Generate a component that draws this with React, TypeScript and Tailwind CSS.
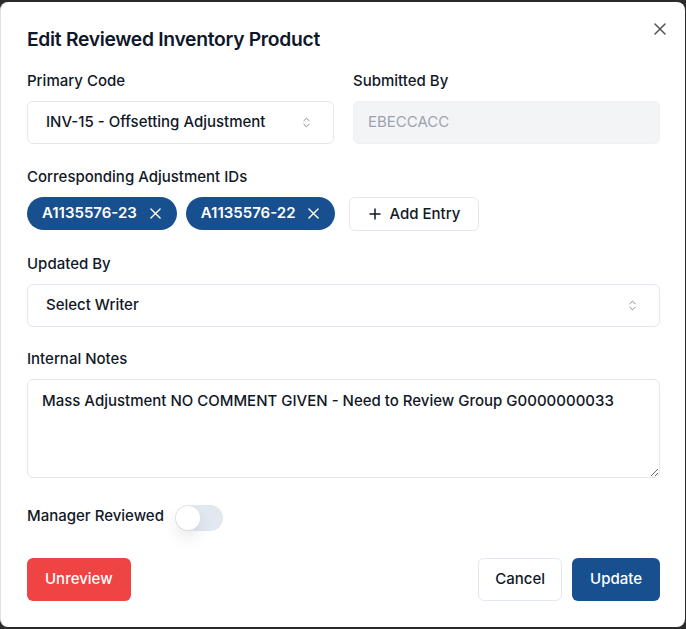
import { ChevronsUpDown } from 'lucide-react'

function CloseIcon({ size = 11, className = '' }: { size?: number; className?: string }) {
  return (
    <svg width={size} height={size} viewBox="0 0 12 12" className={className} fill="none">
      <path d="M1 1l10 10M11 1L1 11" stroke="currentColor" strokeWidth="1.5" strokeLinecap="round" />
    </svg>
  )
}

function Label({ children }: { children: React.ReactNode }) {
  return <label className="block pt-[1px] text-[15px] leading-[21px] font-medium text-[#111827]">{children}</label>
}

function SelectBox({ value }: { value: string }) {
  return (
    <div className="flex h-[43px] items-center justify-between rounded-md border border-[#e2e8f0] bg-white pl-[18px] pr-[20px] text-[15px] font-medium text-[#111827]">
      <span>{value}</span>
      <ChevronsUpDown size={13} strokeWidth={1.5} className="text-gray-500" />
    </div>
  )
}

function Chip({ id }: { id: string }) {
  return (
    <span className="flex h-[33px] items-center gap-[13px] rounded-full bg-[#184f8e] pl-[15px] pr-[16px] text-[15px] font-semibold text-white">
      {id}
      <CloseIcon size={11} />
    </span>
  )
}

export default function App() {
  return (
    <div className="h-[629px] w-[686px] bg-[#2b2b2b] pt-[2px]" style={{ fontFamily: 'Inter, "Noto Sans", sans-serif' }}>
      <div className="relative flex h-[625px] w-[685px] flex-col rounded-lg border-l border-[#dbe3ee] bg-white pl-[26px] pr-[25px] pt-[23px]">
        <button className="absolute right-[19px] top-[21px] text-[#52525b]">
          <CloseIcon size={12} />
        </button>
        <h2 className="text-[19.3px] leading-[28px] font-semibold tracking-[-0.3px] text-[#0f172a]">Edit Reviewed Inventory Product</h2>

        <div className="mt-[16px] flex flex-col gap-[21px]">
          <div className="grid grid-cols-2 gap-[19px]">
            <div className="flex flex-col gap-[10px]">
              <Label>Primary Code</Label>
              <SelectBox value="INV-15 - Offsetting Adjustment" />
            </div>
            <div className="flex flex-col gap-[10px]">
              <Label>Submitted By</Label>
              <div className="flex h-[43px] items-center rounded-md border border-[#eef1f5] bg-[#f3f4f6] px-[14px] text-[15px] text-[#9ca3af]">
                EBECCACC
              </div>
            </div>
          </div>

          <div className="flex flex-col gap-[10px]">
            <Label>Corresponding Adjustment IDs</Label>
            <div className="flex items-start gap-[9px]">
              <Chip id="A1135576-23" />
              <Chip id="A1135576-22" />
              <button className="ml-[5px] flex h-[34px] items-center gap-[8px] rounded-md border border-[#e2e8f0] bg-white pl-[19px] pr-[18px] text-[15px] font-medium text-[#111827]">
                <svg width="12" height="12" viewBox="0 0 12 12" fill="none">
                  <path d="M6 0.5v11M0.5 6h11" stroke="currentColor" strokeWidth="1.5" />
                </svg>
                Add Entry
              </button>
            </div>
          </div>

          <div className="flex flex-col gap-[10px]">
            <Label>Updated By</Label>
            <SelectBox value="Select Writer" />
          </div>

          <div className="-mt-[1px] flex flex-col gap-[10px]">
            <Label>Internal Notes</Label>
            <textarea
              className="h-[99px] w-full rounded-md border border-[#e2e8f0] px-[14px] py-[10px] text-[15px] leading-[22px] font-medium text-[#111827] outline-none"
              defaultValue="Mass Adjustment NO COMMENT GIVEN - Need to Review Group G0000000033"
            />
          </div>
        </div>

        <div className="mt-[26px] flex items-start gap-[11px]">
          <Label>Manager Reviewed</Label>
          <span className="mt-[1px] flex h-[26px] w-[48px] items-center rounded-full bg-[#e2e8f0] px-[1px]">
            <span className="h-[24px] w-[24px] rounded-full bg-white shadow-[0_8px_16px_rgba(0,0,0,0.09)]" />
          </span>
        </div>

        <div className="mt-[27px] flex items-center justify-between">
          <button className="h-[43px] rounded-md bg-[#ef4444] px-[18px] text-[15px] font-medium text-white">Unreview</button>
          <div className="flex gap-[10px]">
            <button className="h-[43px] rounded-md border border-[#e2e8f0] bg-white px-[16px] text-[15px] font-medium text-[#111827]">
              Cancel
            </button>
            <button className="h-[43px] rounded-md bg-[#184f8e] px-[18px] text-[15px] font-medium text-white">Update</button>
          </div>
        </div>
      </div>
    </div>
  )
}
